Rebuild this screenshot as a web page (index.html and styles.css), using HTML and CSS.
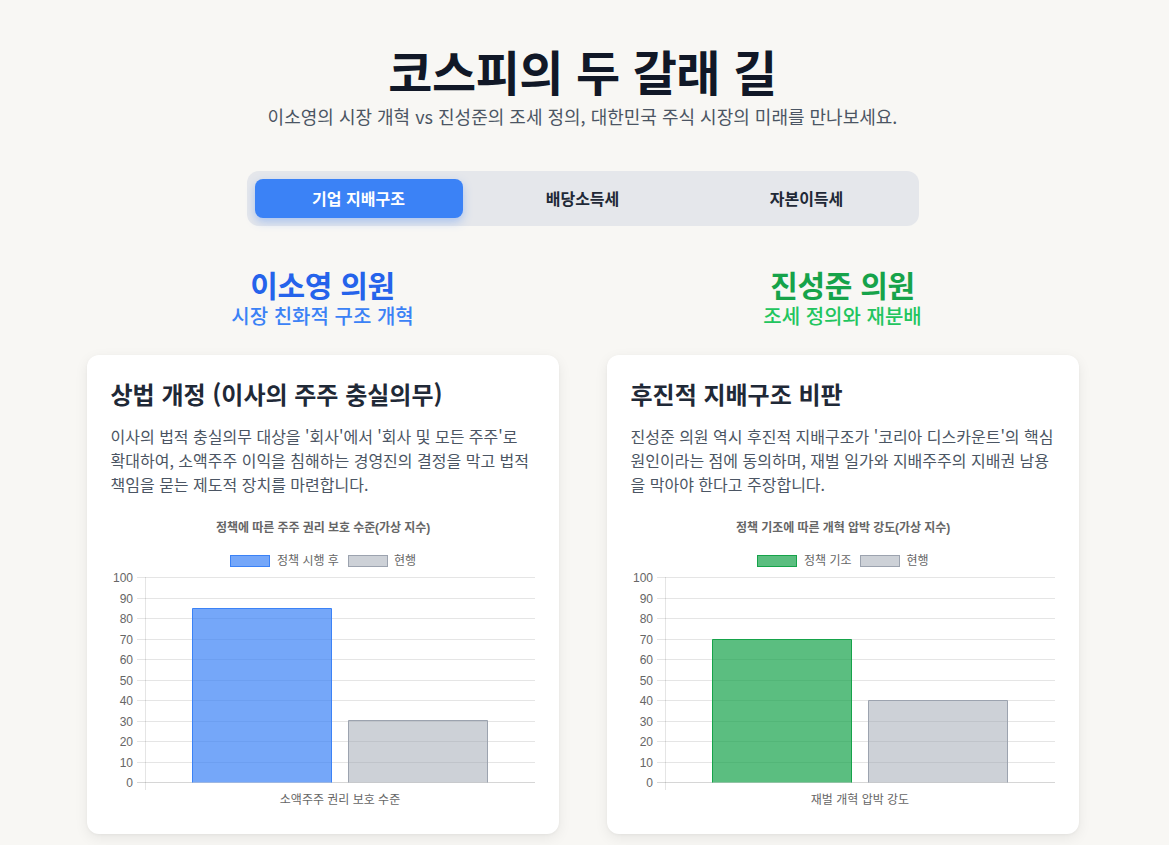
FILE: index.html
```html
<!DOCTYPE html>
<html lang="ko">
<head>
<meta charset="utf-8">
<title>코스피의 두 갈래 길</title>
<link rel="stylesheet" href="styles.css">
</head>
<body>
<main class="page">
  <header class="hero">
    <h1 class="hero-title">코스피의 두 갈래 길</h1>
    <p class="hero-sub">이소영의 시장 개혁 vs 진성준의 조세 정의, 대한민국 주식 시장의 미래를 만나보세요.</p>
  </header>

  <nav class="tabs">
    <button class="tab tab-active">기업 지배구조</button>
    <button class="tab">배당소득세</button>
    <button class="tab">자본이득세</button>
  </nav>

  <section class="columns">
    <div class="column">
      <div class="col-head">
        <h2 class="col-name blue">이소영 의원</h2>
        <p class="col-tag blue-light">시장 친화적 구조 개혁</p>
      </div>
      <article class="card">
        <h3 class="card-title">상법 개정 (이사의 주주 충실의무)</h3>
        <p class="card-text">이사의 법적 충실의무 대상을 '회사'에서 '회사 및 모든 주주'로 확대하여, 소액주주 이익을 침해하는 경영진의 결정을 막고 법적 책임을 묻는 제도적 장치를 마련합니다.</p>
        <svg class="chart" width="424" height="300" viewBox="0 0 424 300">
          <text class="c-title" x="105" y="21.5">정책에 따른 주주 권리 보호 수준(가상 지수)</text>
          <rect x="119.5" y="45.5" width="39" height="11" fill="rgba(59,130,246,0.7)" stroke="rgb(59,130,246)"/>
          <text class="c-text" x="166" y="54.5">정책 시행 후</text>
          <rect x="237.5" y="45.5" width="39" height="11" fill="rgba(156,163,175,0.5)" stroke="rgb(156,163,175)"/>
          <text class="c-text" x="283" y="54.5">현행</text>
          <g class="grid">
            <line x1="26" y1="67.5" x2="424" y2="67.5"/>
            <line x1="26" y1="88.5" x2="424" y2="88.5"/>
            <line x1="26" y1="108.5" x2="424" y2="108.5"/>
            <line x1="26" y1="129.5" x2="424" y2="129.5"/>
            <line x1="26" y1="149.5" x2="424" y2="149.5"/>
            <line x1="26" y1="170.5" x2="424" y2="170.5"/>
            <line x1="26" y1="190.5" x2="424" y2="190.5"/>
            <line x1="26" y1="211.5" x2="424" y2="211.5"/>
            <line x1="26" y1="231.5" x2="424" y2="231.5"/>
            <line x1="26" y1="252.5" x2="424" y2="252.5"/>
            <line x1="34.5" y1="67" x2="34.5" y2="280"/>
          </g>
          <line class="base" x1="26" y1="272.5" x2="424" y2="272.5"/>
          <g class="c-num" text-anchor="end">
            <text x="22" y="71.5">100</text>
            <text x="22" y="92.5">90</text>
            <text x="22" y="112.5">80</text>
            <text x="22" y="133.5">70</text>
            <text x="22" y="153.5">60</text>
            <text x="22" y="174.5">50</text>
            <text x="22" y="194.5">40</text>
            <text x="22" y="215.5">30</text>
            <text x="22" y="235.5">20</text>
            <text x="22" y="256.5">10</text>
            <text x="22" y="276.5">0</text>
          </g>
          <path d="M81.5 272.5 V98.5 H220.5 V272.5" fill="rgba(59,130,246,0.7)" stroke="rgb(59,130,246)"/>
          <path d="M237.5 272.5 V210.5 H376.5 V272.5" fill="rgba(156,163,175,0.5)" stroke="rgb(156,163,175)"/>
          <text class="c-text" x="229" y="293.5" text-anchor="middle">소액주주 권리 보호 수준</text>
        </svg>
      </article>
    </div>

    <div class="column">
      <div class="col-head">
        <h2 class="col-name green">진성준 의원</h2>
        <p class="col-tag green-light">조세 정의와 재분배</p>
      </div>
      <article class="card">
        <h3 class="card-title">후진적 지배구조 비판</h3>
        <p class="card-text">진성준 의원 역시 후진적 지배구조가 '코리아 디스카운트'의 핵심 원인이라는 점에 동의하며, 재벌 일가와 지배주주의 지배권 남용을 막아야 한다고 주장합니다.</p>
        <svg class="chart" width="424" height="300" viewBox="0 0 424 300">
          <text class="c-title" x="105" y="21.5">정책 기조에 따른 개혁 압박 강도(가상 지수)</text>
          <rect x="126.5" y="45.5" width="39" height="11" fill="rgba(22,163,74,0.7)" stroke="rgb(22,163,74)"/>
          <text class="c-text" x="173" y="54.5">정책 기조</text>
          <rect x="229.5" y="45.5" width="39" height="11" fill="rgba(156,163,175,0.5)" stroke="rgb(156,163,175)"/>
          <text class="c-text" x="275.5" y="54.5">현행</text>
          <g class="grid">
            <line x1="26" y1="67.5" x2="424" y2="67.5"/>
            <line x1="26" y1="88.5" x2="424" y2="88.5"/>
            <line x1="26" y1="108.5" x2="424" y2="108.5"/>
            <line x1="26" y1="129.5" x2="424" y2="129.5"/>
            <line x1="26" y1="149.5" x2="424" y2="149.5"/>
            <line x1="26" y1="170.5" x2="424" y2="170.5"/>
            <line x1="26" y1="190.5" x2="424" y2="190.5"/>
            <line x1="26" y1="211.5" x2="424" y2="211.5"/>
            <line x1="26" y1="231.5" x2="424" y2="231.5"/>
            <line x1="26" y1="252.5" x2="424" y2="252.5"/>
            <line x1="34.5" y1="67" x2="34.5" y2="280"/>
          </g>
          <line class="base" x1="26" y1="272.5" x2="424" y2="272.5"/>
          <g class="c-num" text-anchor="end">
            <text x="22" y="71.5">100</text>
            <text x="22" y="92.5">90</text>
            <text x="22" y="112.5">80</text>
            <text x="22" y="133.5">70</text>
            <text x="22" y="153.5">60</text>
            <text x="22" y="174.5">50</text>
            <text x="22" y="194.5">40</text>
            <text x="22" y="215.5">30</text>
            <text x="22" y="235.5">20</text>
            <text x="22" y="256.5">10</text>
            <text x="22" y="276.5">0</text>
          </g>
          <path d="M81.5 272.5 V129.5 H220.5 V272.5" fill="rgba(22,163,74,0.7)" stroke="rgb(22,163,74)"/>
          <path d="M237.5 272.5 V190.5 H376.5 V272.5" fill="rgba(156,163,175,0.5)" stroke="rgb(156,163,175)"/>
          <text class="c-text" x="229" y="293.5" text-anchor="middle">재벌 개혁 압박 강도</text>
        </svg>
      </article>
    </div>
  </section>
</main>
</body>
</html>
```

FILE: styles.css
```css
* { box-sizing: border-box; }

body {
  margin: 0;
  padding-right: 4px;
  background: #f8f7f4;
  font-family: "Noto Sans CJK KR", "Noto Sans", sans-serif;
  color: #1f2937;
}

.page {
  max-width: 992px;
  margin: 0 auto;
  padding: 46px 0 40px;
}

.hero { text-align: center; }

.hero-title {
  margin: 0;
  font-size: 48px;
  line-height: 48px;
  font-weight: 700;
  letter-spacing: -0.01em;
  color: #111827;
}

.hero-sub {
  margin: 8px 0 0;
  font-size: 18px;
  line-height: 28px;
  color: #4b5563;
}

.tabs {
  width: 672px;
  margin: 41px auto 0;
  padding: 8px;
  display: flex;
  gap: 16px;
  background: #e5e7eb;
  border-radius: 12px;
}

.tab {
  flex: 1;
  border: 0;
  background: transparent;
  border-radius: 8px;
  padding: 8px 0;
  font-family: inherit;
  font-size: 16px;
  line-height: 23px;
  font-weight: 600;
  color: #1f2937;
}

.tab-active {
  background: #3b82f6;
  color: #ffffff;
  box-shadow: 0 4px 10px rgba(59, 130, 246, 0.35);
}

.columns {
  margin-top: 40px;
  display: grid;
  grid-template-columns: 1fr 1fr;
  gap: 48px;
}

.col-head {
  text-align: center;
  margin-bottom: 25px;
}

.col-name {
  margin: 0;
  font-size: 30px;
  line-height: 36px;
  font-weight: 700;
  letter-spacing: -0.01em;
}

.col-tag {
  margin: 0;
  font-size: 20px;
  line-height: 28px;
  font-weight: 500;
}

.blue { color: #2563eb; }
.blue-light { color: #3b82f6; }
.green { color: #16a34a; }
.green-light { color: #22c55e; }

.card {
  background: #ffffff;
  border-radius: 12px;
  padding: 23px 24px 24px;
  box-shadow: 0 4px 14px rgba(0, 0, 0, 0.07), 0 1px 3px rgba(0, 0, 0, 0.04);
}

.card-title {
  margin: 0;
  font-size: 24px;
  line-height: 32px;
  font-weight: 700;
  color: #1f2937;
}

.card-text {
  margin: 14px 0 0;
  font-size: 16px;
  line-height: 24px;
  color: #4b5563;
}

.chart {
  display: block;
  margin-top: 14px;
  overflow: visible;
}

.c-title {
  font-family: "Liberation Sans", "Noto Sans CJK KR", sans-serif;
  font-size: 12px;
  font-weight: 700;
  letter-spacing: -0.005em;
  fill: #666666;
}

.c-text {
  font-family: "Liberation Sans", "Noto Sans CJK KR", sans-serif;
  font-size: 12px;
  fill: #666666;
}

.c-num {
  font-family: "Liberation Sans", sans-serif;
  font-size: 12px;
  fill: #666666;
}

.grid line {
  stroke: rgba(0, 0, 0, 0.1);
  stroke-width: 1;
}

.base {
  stroke: rgba(0, 0, 0, 0.16);
  stroke-width: 1;
}
```
